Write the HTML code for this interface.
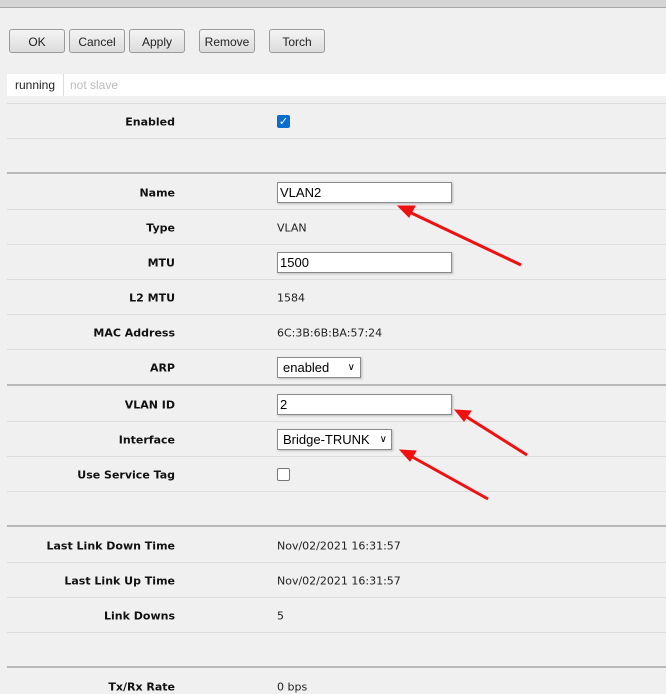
<!DOCTYPE html>
<html><head><style>
body{margin:0;width:666px;height:691px;background:#f0f0f0;position:relative;overflow:hidden;font-family:"DejaVu Sans","Liberation Sans",sans-serif;}
.top{position:absolute;left:0;top:0;width:666px;height:7px;background:#d4d4d4;border-bottom:1px solid #a8a8a8;}
.btn{position:absolute;top:29px;height:24px;border:1px solid #9a9a9a;border-radius:3px;background:linear-gradient(#f4f4f4,#dcdcdc);font:12px "Liberation Sans",sans-serif;color:#222;text-align:center;line-height:24px;box-sizing:border-box;}
.tabs{position:absolute;left:7px;top:74px;width:659px;height:22px;background:#fff;font:12px "Liberation Sans",sans-serif;}
.line{position:absolute;left:7px;width:659px;height:1px;background:#dcdcdc;}
.dk{background:#b8b8b8;height:2px;}
.lb{position:absolute;right:491px;font-weight:bold;font-size:11px;color:#111;white-space:nowrap;transform:translateY(-50%);}
.v{position:absolute;left:277px;font-size:11px;color:#222;white-space:nowrap;transform:translateY(-50%);}
.in{position:absolute;left:277px;width:175px;height:21px;background:#fff;border:1px solid #8a8a8a;box-shadow:1px 1px 2px #bbb;box-sizing:border-box;font:13px "Liberation Sans",sans-serif;padding-left:2px;line-height:19px;}
</style></head><body>
<div class="top"></div>
<div class="btn" style="left:9px;width:56px">OK</div>
<div class="btn" style="left:69px;width:56px">Cancel</div>
<div class="btn" style="left:129px;width:56px">Apply</div>
<div class="btn" style="left:199px;width:56px">Remove</div>
<div class="btn" style="left:269px;width:56px">Torch</div>
<div class="tabs"><span style="position:absolute;left:0;top:0;width:56px;height:22px;border-right:1px solid #ddd;text-align:center;line-height:22px;color:#222">running</span><span style="position:absolute;left:63px;line-height:22px;color:#bbb">not slave</span></div>
<div class="line" style="top:103px"></div>
<div class="line" style="top:138px"></div>
<div class="line dk" style="top:172px"></div>
<div class="line" style="top:209px"></div>
<div class="line" style="top:244px"></div>
<div class="line" style="top:279px"></div>
<div class="line" style="top:314px"></div>
<div class="line" style="top:349px"></div>
<div class="line dk" style="top:384px"></div>
<div class="line" style="top:421px"></div>
<div class="line" style="top:456px"></div>
<div class="line" style="top:491px"></div>
<div class="line dk" style="top:525px"></div>
<div class="line" style="top:562px"></div>
<div class="line" style="top:597px"></div>
<div class="line" style="top:632px"></div>
<div class="line dk" style="top:666px"></div>

<div class="lb" style="top:122px">Enabled</div>
<div style="position:absolute;left:277px;top:115px;width:13px;height:13px;background:#0a6ed1;border-radius:2px;color:#fff;font-size:11px;line-height:13px;text-align:center;font-weight:bold">✓</div>
<div class="lb" style="top:193px">Name</div><div class="in" style="top:182px">VLAN2</div>
<div class="lb" style="top:228px">Type</div><div class="v" style="top:228px">VLAN</div>
<div class="lb" style="top:263px">MTU</div><div class="in" style="top:252px">1500</div>
<div class="lb" style="top:298px">L2 MTU</div><div class="v" style="top:298px">1584</div>
<div class="lb" style="top:333px">MAC Address</div><div class="v" style="top:333px">6C:3B:6B:BA:57:24</div>
<div class="lb" style="top:368px">ARP</div><div class="in" style="top:357px;width:84px;padding-left:5px">enabled <span style="position:absolute;right:5px;font-size:10px">&#x2228;</span></div>
<div class="lb" style="top:405px">VLAN ID</div><div class="in" style="top:394px">2</div>
<div class="lb" style="top:440px">Interface</div><div class="in" style="top:429px;width:115px;padding-left:5px">Bridge-TRUNK <span style="position:absolute;right:4px;font-size:10px">&#x2228;</span></div>
<div class="lb" style="top:475px">Use Service Tag</div>
<div style="position:absolute;left:277px;top:468px;width:11px;height:11px;border:1px solid #777;border-radius:2px;background:#fff"></div>
<div class="lb" style="top:546px">Last Link Down Time</div><div class="v" style="top:546px">Nov/02/2021 16:31:57</div>
<div class="lb" style="top:581px">Last Link Up Time</div><div class="v" style="top:581px">Nov/02/2021 16:31:57</div>
<div class="lb" style="top:616px">Link Downs</div><div class="v" style="top:616px">5</div>
<div class="lb" style="top:687px">Tx/Rx Rate</div><div class="v" style="top:687px">0 bps</div>

<svg style="position:absolute;left:0;top:0" width="666" height="691">
<g stroke="#f01010" stroke-width="3" fill="#f01010">
<line x1="521" y1="265" x2="405" y2="210"/>
<polygon points="398,206 415,206 409,217" stroke-width="1"/>
<line x1="527" y1="455" x2="462" y2="414"/>
<polygon points="455,410 471,411 464,421" stroke-width="1"/>
<line x1="488" y1="499" x2="407" y2="454"/>
<polygon points="400,450 416,451 410,461" stroke-width="1"/>
</g></svg>
</body></html>
